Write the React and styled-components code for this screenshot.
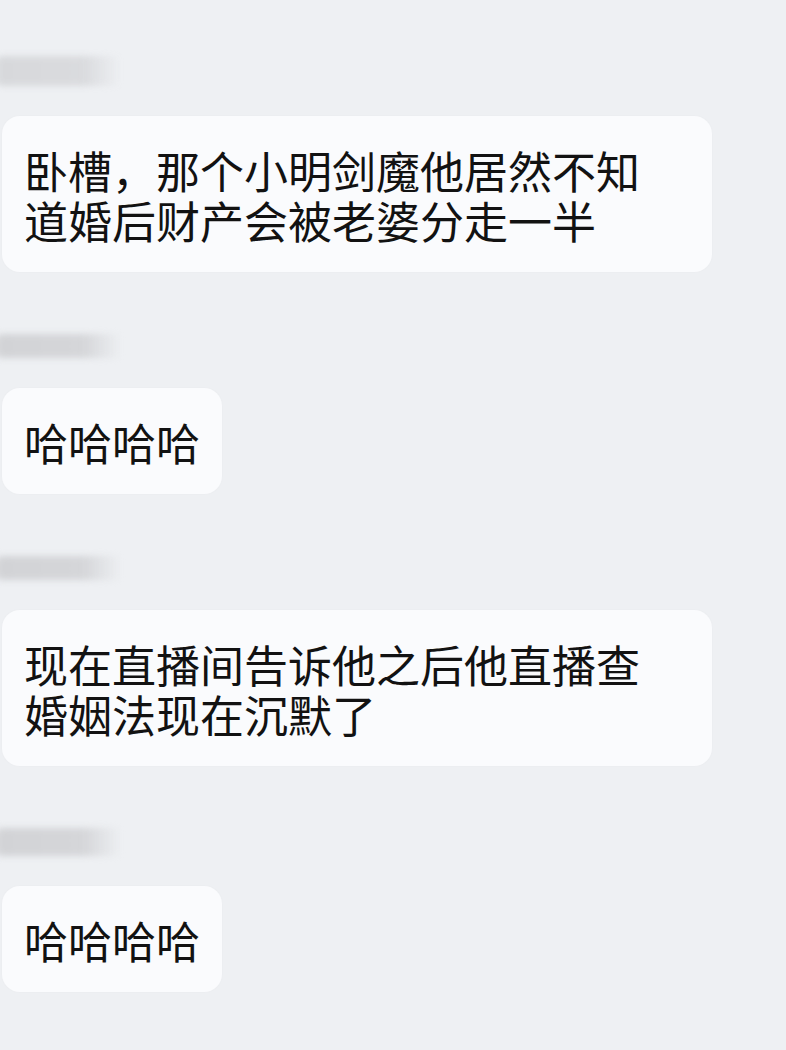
import React from "react";
import styled, { createGlobalStyle } from "styled-components";

const GlobalStyle = createGlobalStyle`
  html, body {
    margin: 0;
    padding: 0;
    background: #eef0f3;
  }
  body {
    font-family: "Noto Sans CJK SC", "Noto Sans", sans-serif;
  }
`;

const Page = styled.div`
  width: 786px;
  height: 1050px;
  overflow: hidden;
  background: #eef0f3;
  display: flex;
  flex-direction: column;
  padding-top: 56px;
  box-sizing: border-box;
`;

const Message = styled.div`
  display: flex;
  flex-direction: column;
  align-items: flex-start;
  gap: 30px;
  margin-bottom: 62px;
`;

// blurred-out sender name
const NameBar = styled.div`
  width: ${(p) => p.$w || 125}px;
  height: ${(p) => p.$h || 24}px;
  margin-left: -4px;
  border-radius: 6px;
  background: linear-gradient(to right, #d2d3d6 0%, #d5d6d9 70%, rgba(213, 214, 217, 0) 100%);
  filter: blur(3px);
  opacity: ${(p) => p.$o || 1};
`;

const Bubble = styled.div`
  margin-left: 2px;
  width: ${(p) => (p.$wide ? "710px" : "auto")};
  box-sizing: border-box;
  padding: 29px 22px 27px 22px;
  background: #fafbfd;
  border-radius: 18px;
  box-shadow: 0 0 3px rgba(0, 0, 0, 0.025);
`;

const Text = styled.div`
  max-width: 630px;
  font-size: 44px;
  line-height: 50px;
  color: #121212;
`;

const messages = [
  { text: "卧槽，那个小明剑魔他居然不知道婚后财产会被老婆分走一半", wide: true, bar: { h: 30, o: 0.8 } },
  { text: "哈哈哈哈", wide: false, bar: { h: 24 } },
  { text: "现在直播间告诉他之后他直播查婚姻法现在沉默了", wide: true, bar: { h: 24 } },
  { text: "哈哈哈哈", wide: false, bar: { h: 28 } },
];

export default function App() {
  return (
    <>
      <GlobalStyle />
      <Page>
        {messages.map((m, i) => (
          <Message key={i}>
            <NameBar $h={m.bar.h} $o={m.bar.o} />
            <Bubble $wide={m.wide}>
              <Text>{m.text}</Text>
            </Bubble>
          </Message>
        ))}
        <NameBar $h={20} $o={0.6} />
      </Page>
    </>
  );
}
